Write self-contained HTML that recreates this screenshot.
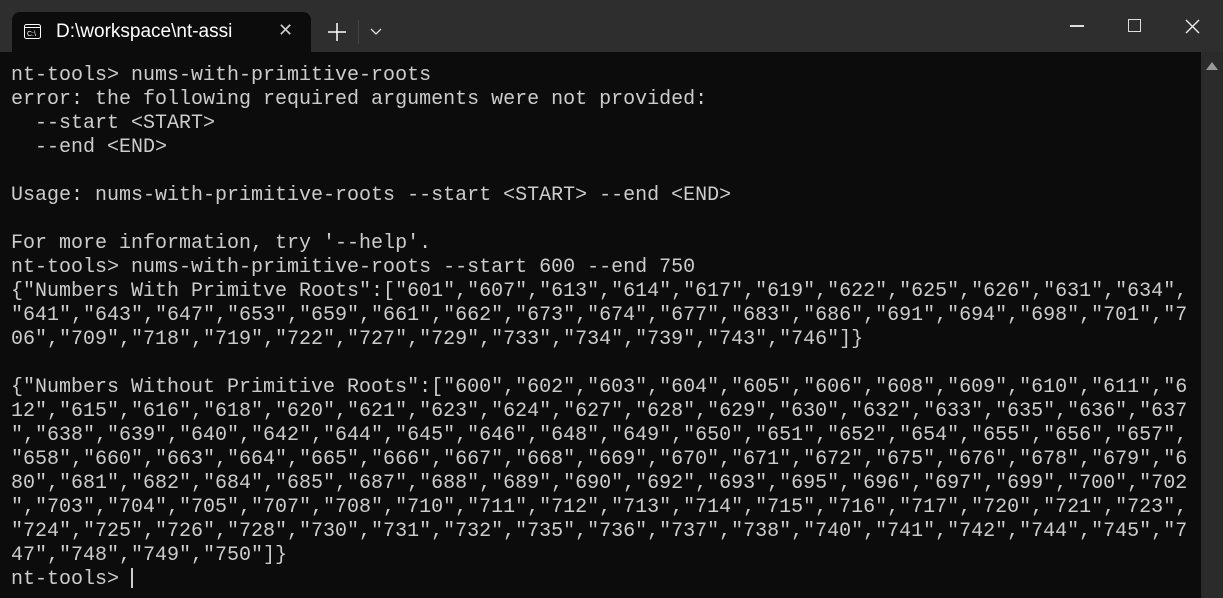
<!DOCTYPE html>
<html><head><style>
html,body{margin:0;padding:0;width:1223px;height:598px;overflow:hidden;background:#2e2e2e;font-family:"Liberation Sans",sans-serif}
.tab{position:absolute;left:12px;top:12px;width:299px;height:40px;background:#0c0c0c;border-radius:8px 8px 0 0}
.tab .t{position:absolute;left:44px;top:9px;color:#fff;font-size:19px}
.tab .x{position:absolute;left:266px;top:8px;color:#ccc;font-size:18px}
.term{position:absolute;left:0;top:52px;width:1201px;height:546px;background:#0c0c0c}
pre{margin:0;position:absolute;left:11px;top:64px;font-family:"Liberation Mono",monospace;font-size:20px;line-height:24px;color:#cccccc;letter-spacing:0}
.sb{position:absolute;left:1201px;top:52px;width:22px;height:546px;background:#2b2b2b}
.cur{display:inline-block;width:2px;height:20px;background:#ccc;vertical-align:-4px}
</style></head><body>
<div class="tab">
<svg style="position:absolute;left:12px;top:12px" width="17" height="15" viewBox="0 0 17 15"><rect x="0.5" y="0.5" width="16" height="14" rx="2" fill="none" stroke="#fff"/><line x1="1" y1="3.5" x2="16" y2="3.5" stroke="#fff"/><text x="3" y="12" font-size="7" fill="#fff" font-family="Liberation Sans">C:\</text></svg>
<div class="t">D:\workspace\nt-assi</div>
<div class="x">✕</div>
</div>
<svg style="position:absolute;left:327px;top:22px" width="20" height="20"><path d="M10 1V19M1 10H19" stroke="#fff" stroke-width="1.5"/></svg>
<div style="position:absolute;left:358px;top:20px;width:1px;height:24px;background:#444"></div>
<svg style="position:absolute;left:370px;top:28px" width="12" height="8"><path d="M1 1L6 6L11 1" stroke="#ddd" fill="none" stroke-width="1.3"/></svg>
<div style="position:absolute;left:1070px;top:25px;width:14px;height:1.5px;background:#ddd"></div>
<div style="position:absolute;left:1128px;top:19px;width:11px;height:11px;border:1.3px solid #ddd"></div>
<svg style="position:absolute;left:1185px;top:19px" width="15" height="15"><path d="M1 1L14 14M14 1L1 14" stroke="#eee" stroke-width="1.4"/></svg>
<div class="term"></div>
<div class="sb"><svg style="position:absolute;left:5px;top:10px" width="12" height="8"><path d="M6 0L12 8H0Z" fill="#999"/></svg></div>
<pre>nt-tools&gt; nums-with-primitive-roots
error: the following required arguments were not provided:
  --start &lt;START&gt;
  --end &lt;END&gt;

Usage: nums-with-primitive-roots --start &lt;START&gt; --end &lt;END&gt;

For more information, try '--help'.
nt-tools&gt; nums-with-primitive-roots --start 600 --end 750
{"Numbers With Primitve Roots":["601","607","613","614","617","619","622","625","626","631","634",
"641","643","647","653","659","661","662","673","674","677","683","686","691","694","698","701","7
06","709","718","719","722","727","729","733","734","739","743","746"]}

{"Numbers Without Primitive Roots":["600","602","603","604","605","606","608","609","610","611","6
12","615","616","618","620","621","623","624","627","628","629","630","632","633","635","636","637
","638","639","640","642","644","645","646","648","649","650","651","652","654","655","656","657",
"658","660","663","664","665","666","667","668","669","670","671","672","675","676","678","679","6
80","681","682","684","685","687","688","689","690","692","693","695","696","697","699","700","702
","703","704","705","707","708","710","711","712","713","714","715","716","717","720","721","723",
"724","725","726","728","730","731","732","735","736","737","738","740","741","742","744","745","7
47","748","749","750"]}
nt-tools&gt; <span class="cur"></span></pre>
</body></html>
